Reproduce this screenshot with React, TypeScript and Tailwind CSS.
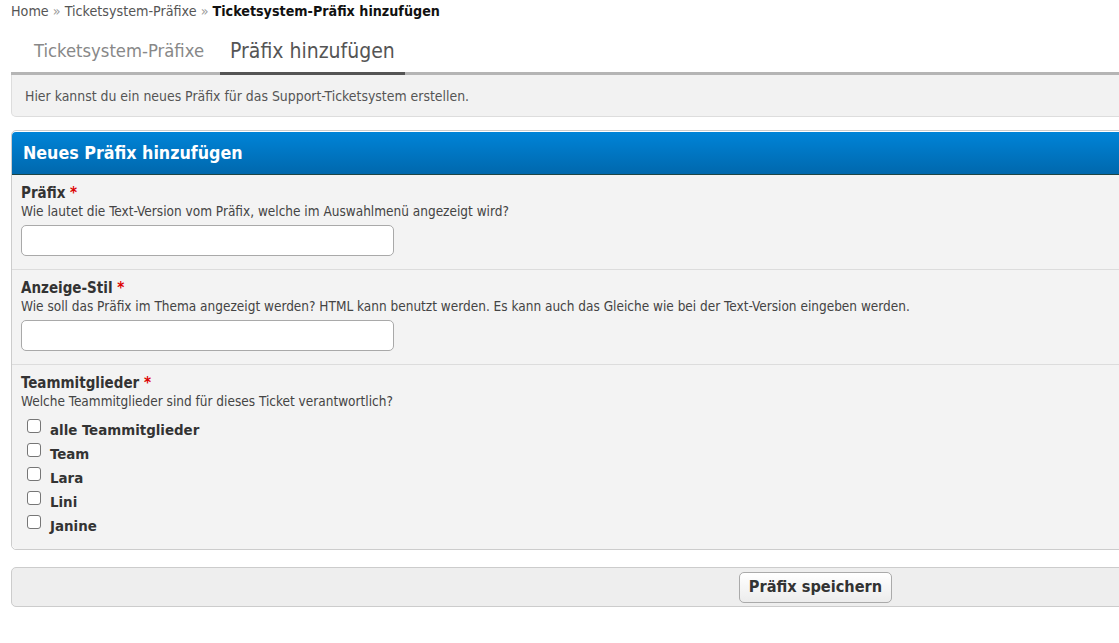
const font = "font-['DejaVu_Sans_Condensed','DejaVu_Sans',sans-serif]"

const members = ['alle Teammitglieder', 'Team', 'Lara', 'Lini', 'Janine']

function Field({ label, desc, children, last }: { label: string; desc: string; children: React.ReactNode; last?: boolean }) {
  return (
    <div className={`bg-[#f3f3f3] px-[9px] pt-[9px] ${last ? 'pb-[13px] rounded-b-[5px]' : 'pb-[13px] border-b border-[#dcdcdc]'}`}>
      <div className="text-[15px] font-bold text-[#333] leading-[18px]">
        {label} <span className="text-[#dd0000]">*</span>
      </div>
      <div className="text-[13.5px] text-[#444] leading-[18px]">{desc}</div>
      {children}
    </div>
  )
}

export default function App() {
  return (
    <div className={`w-full overflow-hidden bg-white ${font}`}>
      <div className="w-[1620px] pl-[11px] pr-0 pb-8">
        <div className="text-[14.2px] leading-[22px] text-[#555]">
          Home <span className="text-[#999]">»</span> Ticketsystem-Präfixe <span className="text-[#999]">»</span>{' '}
          <span className="font-bold text-[#111]">Ticketsystem-Präfix hinzufügen</span>
        </div>

        <div className="mt-[18px] flex border-b-[3px] border-[#b5b5b5] pl-[10px]">
          <div className="mr-[3px] pl-[13px] pr-[13px] pb-[10px] text-[18.3px] leading-[22px] text-[#888]">Ticketsystem-Präfixe</div>
          <div className="-mb-[3px] border-b-[3px] border-[#555] px-[10px] pb-[10px] text-[21px] leading-[22px] text-[#555]">Präfix hinzufügen</div>
        </div>

        <div className="h-[42px] rounded-b-[5px] border border-t-0 border-[#dddddd] bg-[#f2f2f2] pl-[13px] text-[13.9px] leading-[42px] text-[#555]">
          Hier kannst du ein neues Präfix für das Support-Ticketsystem erstellen.
        </div>

        <div className="mt-[13px] rounded-[5px] border border-[#cccccc] bg-white pt-[1px]">
          <div className="h-[43px] rounded-t-[4px] border-b border-[#1d4545] bg-gradient-to-b from-[#0084d8] to-[#0068ad] pl-[11px] text-[17.7px] font-bold leading-[43px] text-white">
            Neues Präfix hinzufügen
          </div>
          <Field label="Präfix" desc="Wie lautet die Text-Version vom Präfix, welche im Auswahlmenü angezeigt wird?">
            <input className="mt-[5px] block h-[31px] w-[373px] rounded-[5px] border border-[#a9a9a9] bg-white" />
          </Field>
          <Field
            label="Anzeige-Stil"
            desc="Wie soll das Präfix im Thema angezeigt werden? HTML kann benutzt werden. Es kann auch das Gleiche wie bei der Text-Version eingeben werden."
          >
            <input className="mt-[5px] block h-[31px] w-[373px] rounded-[5px] border border-[#a9a9a9] bg-white" />
          </Field>
          <Field label="Teammitglieder" desc="Welche Teammitglieder sind für dieses Ticket verantwortlich?" last>
            <div className="mt-[6px] flex flex-col">
              {members.map((m) => (
                <label key={m} className="flex h-[24px] items-center gap-[9px] pl-[6px]">
                  <span className="mb-[4px] block h-[14px] w-[14px] rounded-[3px] border border-[#767676] bg-white" />
                  <span className="translate-y-[2px] text-[14.9px] font-bold text-[#333]">{m}</span>
                </label>
              ))}
            </div>
          </Field>
        </div>

        <div className="mt-[17px] flex h-[40px] items-center justify-center rounded-[5px] border border-[#cccccc] bg-[#eeeeee]">
          <button className="h-[31px] rounded-[5px] border border-[#aaaaaa] bg-gradient-to-b from-white to-[#ececec] px-[9px] text-[16.2px] font-bold text-[#333]">
            Präfix speichern
          </button>
        </div>
      </div>
    </div>
  )
}
